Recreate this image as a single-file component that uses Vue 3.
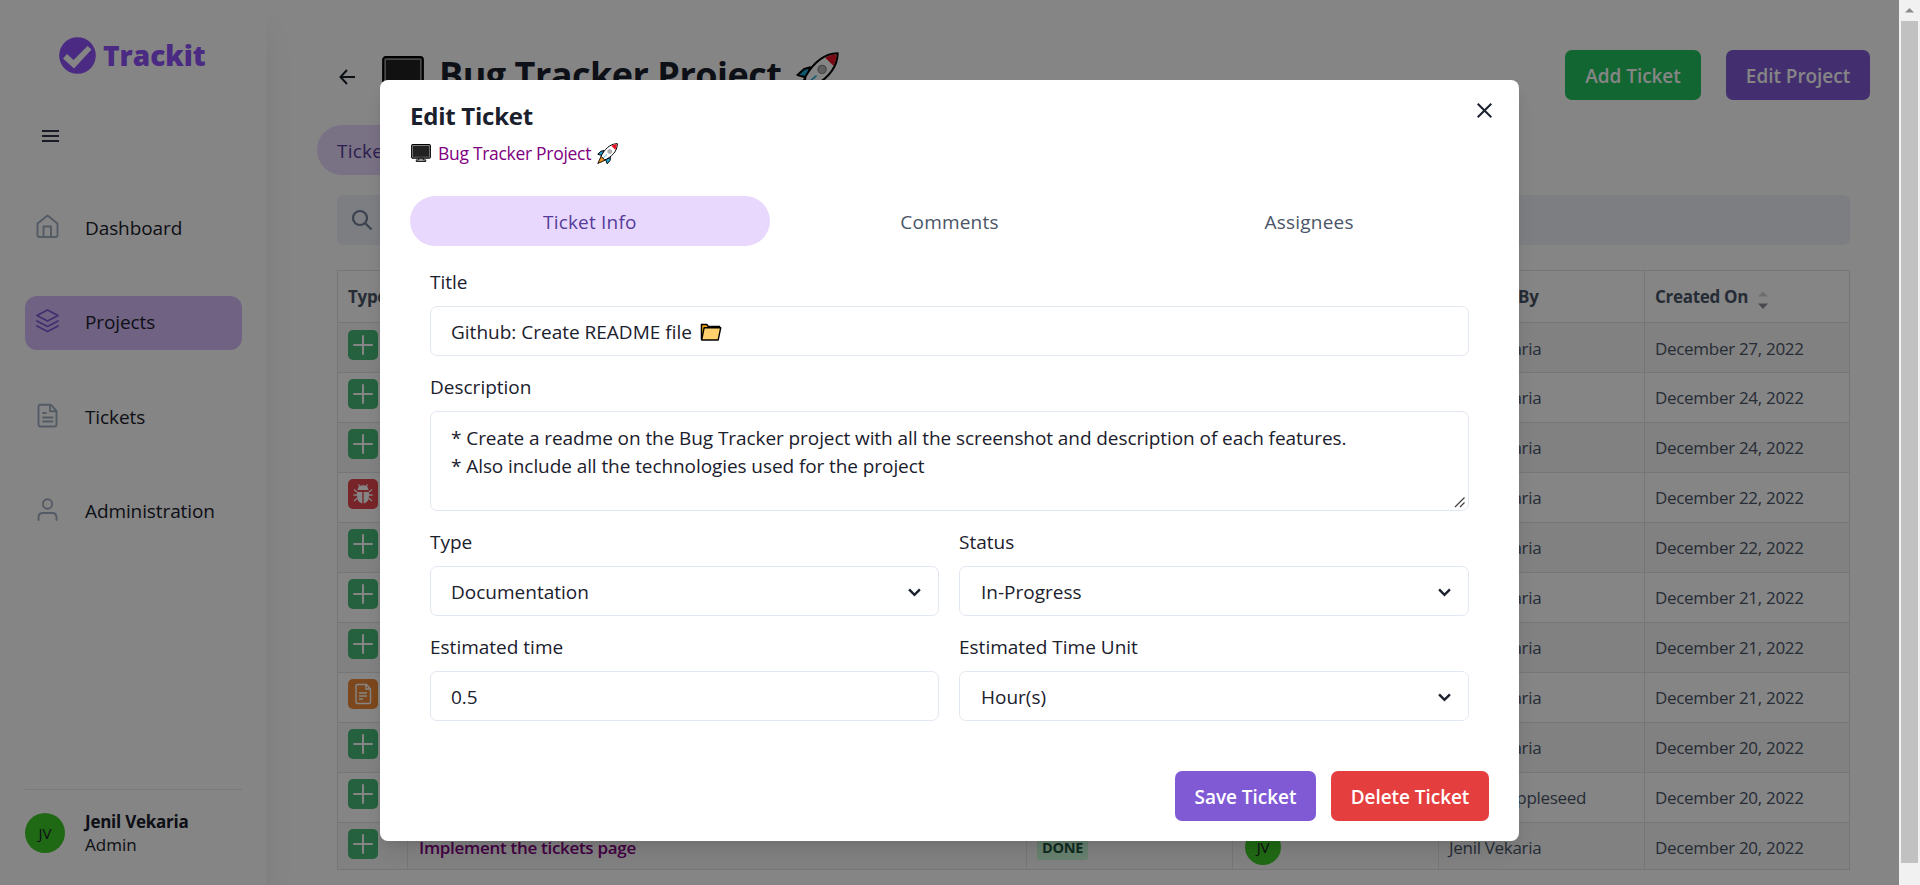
<script setup>
const nav = [
  { label: 'Dashboard', icon: 'home' },
  { label: 'Projects', icon: 'layers', active: true },
  { label: 'Tickets', icon: 'file' },
  { label: 'Administration', icon: 'user' },
]

const jenil = 'Jenil Vekaria'
const rows = [
  { type: 'feature', by: jenil, date: 'December 27, 2022' },
  { type: 'feature', by: jenil, date: 'December 24, 2022' },
  { type: 'feature', by: jenil, date: 'December 24, 2022' },
  { type: 'bug', by: jenil, date: 'December 22, 2022' },
  { type: 'feature', by: jenil, date: 'December 22, 2022' },
  { type: 'feature', by: jenil, date: 'December 21, 2022' },
  { type: 'feature', by: jenil, date: 'December 21, 2022' },
  { type: 'doc', by: jenil, date: 'December 21, 2022' },
  { type: 'feature', by: jenil, date: 'December 20, 2022' },
  { type: 'feature', by: 'Johnny Appleseed', date: 'December 20, 2022' },
  { type: 'feature', by: jenil, date: 'December 20, 2022', title: 'Implement the tickets page', status: 'DONE', assignee: 'JV' },
]

const description =
  '* Create a readme on the Bug Tracker project with all the screenshot and description of each features.\n* Also include all the technologies used for the project'
</script>

<template>
  <div class="screen">
    <svg width="0" height="0" class="defs">
      <symbol id="monitor" viewBox="0 0 42 38">
        <rect x="1.2" y="1.2" width="39.6" height="28.6" rx="2.5" fill="#8d8d8d" stroke="#000" stroke-width="2.2" />
        <rect x="4" y="4" width="34" height="23" fill="#222" />
        <path d="M16 30h10v3.5h5V37H11v-3.5h5z" fill="#9a9a9a" stroke="#000" stroke-width="1.8" />
      </symbol>
      <symbol id="rocket" viewBox="0 0 42 42">
        <path d="M9 25 1.5 41 17 34z" fill="#f7941d" stroke="#000" stroke-width="1.8" stroke-linejoin="round" />
        <path d="M14 15 8 16.500 1.500 22.500 10 25zM27 29l-1 6-5.500 6.500L17 33z" fill="#1ba7d9" stroke="#000" stroke-width="2" stroke-linejoin="round" />
        <path d="M40.700 1.300C31 1.500 20 6 9.500 23.500L8.500 27l6.500 6.500 4-1C35 23 40.500 13 40.700 1.300z" fill="#fff" stroke="#000" stroke-width="2" stroke-linejoin="round" />
        <path d="M39.600 2.400C36 2.500 32 3.500 28.500 5.500L36.500 13.500C38.800 9.500 39.500 6 39.600 2.400z" fill="#e81224" />
        <circle cx="25.500" cy="17" r="4" fill="#b5b5b5" stroke="#8a8a8a" stroke-width="1.200" />
        <path d="m12 30 8-7" stroke="#1ba7d9" stroke-width="1.500" />
      </symbol>
      <symbol id="chevron" viewBox="0 0 12 8">
        <path d="M1 1.200 6 6.200 11 1.200" fill="none" stroke="#1a202c" stroke-width="2.200" />
      </symbol>
    </svg>

    <div class="page">
      <aside class="sidebar">
        <div class="logo">
          <svg width="37" height="37" viewBox="0 0 37 37">
            <circle cx="18.500" cy="18.500" r="18.300" fill="#8f51fb" />
            <path d="M4 21.500 8 17l6.500 6L28.500 9l4 3.500L15 31.500z" fill="#fff" />
          </svg>
          <span>Trackit</span>
        </div>
        <svg class="burger" width="18" height="12" viewBox="0 0 18 12">
          <path d="M0 1h17M0 6h17M0 11h17" stroke="#2d3748" stroke-width="2" />
        </svg>
        <nav>
          <div v-for="n in nav" :key="n.label" class="nav-item" :class="{ active: n.active }">
            <svg width="25" height="25" viewBox="0 0 25 25" fill="none" stroke="currentColor" stroke-width="1.900" stroke-linejoin="round" stroke-linecap="round">
              <path v-if="n.icon === 'home'" d="M2.500 9.500 12.500 1.500l10 8V21q0 2-2 2h-16q-2 0-2-2zM8.500 23V12.500h7.500V23" />
              <path v-else-if="n.icon === 'layers'" d="m12.500 2 10.500 5.500-10.500 5.500L2 7.500zM2 13l10.500 5.500L23 13M2 18l10.500 5.500L23 18" />
              <path v-else-if="n.icon === 'file'" d="M5.500 1.800h10.500l5.500 6V21.500q0 2-2 2h-14q-2 0-2-2V3.800q0-2 2-2zM15 2v6.300h6.500M8 10h3M8 14.500h9.500M8 18.500h9.500" />
              <path v-else d="M3.500 23v-2.500q0-4.500 4.500-4.500h9q4.500 0 4.500 4.500V23M17.200 7a4.700 4.700 0 1 1-9.400 0 4.700 4.700 0 0 1 9.400 0z" />
            </svg>
            <span>{{ n.label }}</span>
          </div>
        </nav>
        <div class="account">
          <div class="avatar">JV</div>
          <div class="who">
            <b>Jenil Vekaria</b>
            <span>Admin</span>
          </div>
        </div>
      </aside>

      <main>
        <header>
          <svg class="back" width="17" height="16" viewBox="0 0 17 16">
            <path d="M16 8H1.500M8 1 1.500 8 8 15" fill="none" stroke="#1a202c" stroke-width="2" />
          </svg>
          <h1>
            <svg width="42" height="38"><use href="#monitor" /></svg>
            <span>Bug Tracker Project</span>
            <svg class="h-rocket" width="43" height="43"><use href="#rocket" /></svg>
          </h1>
          <button class="btn green">Add Ticket</button>
          <button class="btn purple">Edit Project</button>
        </header>
        <div class="tab-pill">Tickets</div>
        <div class="search">
          <svg width="22" height="22" viewBox="0 0 22 22" fill="none" stroke="#718096" stroke-width="2.200">
            <circle cx="9" cy="9" r="7" />
            <path d="m14 14 6.500 6.500" />
          </svg>
        </div>
        <div class="table">
          <div class="row head">
            <div>Type</div><div>Title</div><div>Status</div><div>Assignees</div><div class="by-head">Created By</div>
            <div>
              Created On
              <svg width="12" height="20" viewBox="0 0 12 20">
                <path d="M1 6.500 6 1.500l5 5z" fill="#d0d3d8" />
                <path d="M1 13.500 6 19l5-5.500z" fill="#8a8f98" />
              </svg>
            </div>
          </div>
          <div v-for="(r, i) in rows" :key="i" class="row">
            <div>
              <svg class="type" width="30" height="30" viewBox="0 0 30 30" :class="r.type">
                <rect width="30" height="30" rx="5" />
                <path v-if="r.type === 'feature'" d="M15 6v18M6 15h18" stroke="#fff" stroke-width="2" stroke-linecap="round" />
                <g v-else-if="r.type === 'bug'" stroke="#fff" stroke-width="1.300" fill="none">
                  <path d="M9.500 11a5.500 4.800 0 0 1 11 0zM9 13h5.300v11.500Q9 23 9 17zM15.700 13H21v4q0 6-5.300 7.500z" fill="#fff" stroke="none" />
                  <path d="M10.500 5.500 12 8M19.500 5.500 18 8M9 13 6 10.500M21 13l3-2.500M9 16H5.500M21 16h3.500M9.500 19 6 22M20.500 19l3.500 3" />
                </g>
                <g v-else stroke="#fff" stroke-width="1.400" fill="none">
                  <path d="M9.500 5.500h9l4 4.500V23q0 1.500-1.500 1.500H9.500Q8 24.500 8 23V7q0-1.500 1.500-1.500zM18 5.500V10h4.500M11 14h8M11 17h8M11 20h4" />
                </g>
              </svg>
            </div>
            <div class="ticket">{{ r.title }}</div>
            <div><span v-if="r.status" class="badge">{{ r.status }}</span></div>
            <div><span v-if="r.assignee" class="avatar small">{{ r.assignee }}</span></div>
            <div>{{ r.by }}</div>
            <div>{{ r.date }}</div>
          </div>
        </div>
      </main>
    </div>

    <div class="overlay">
      <section class="modal">
        <div class="modal-head">
          <div>
            <h2>Edit Ticket</h2>
            <a class="project">
              <svg width="20" height="18"><use href="#monitor" /></svg>
              <span>Bug Tracker Project</span>
              <svg class="m-rocket" width="21" height="21"><use href="#rocket" /></svg>
            </a>
          </div>
          <svg class="close" width="15" height="15" viewBox="0 0 15 15">
            <path d="m.7.700 13.600 13.600M14.300.700.700 14.300" stroke="#1a202c" stroke-width="2" />
          </svg>
        </div>
        <div class="tabs">
          <div class="tab on">Ticket Info</div>
          <div class="tab">Comments</div>
          <div class="tab">Assignees</div>
        </div>
        <div class="form">
          <div class="field wide">
            <label>Title</label>
            <div class="control">
              <span class="file-name">Github: Create README file</span>
              <svg width="22" height="18" viewBox="0 0 20 17">
                <path d="M1 15.500V1.500h5l1.500 1.800H18V5" fill="#f2a900" stroke="#000" stroke-width="1.400" />
                <path d="M3.500 4.500h15.700L16.800 16H1.200z" fill="#ffd06b" stroke="#000" stroke-width="1.300" stroke-linejoin="round" />
              </svg>
            </div>
          </div>
          <div class="field wide">
            <label>Description</label>
            <div class="control area">
              <span class="desc">{{ description }}</span>
              <svg class="grip" width="12" height="12" viewBox="0 0 12 12">
                <path d="M1 11 10.500 1.500M6 11l4.500-4.500" stroke="#444" stroke-width="1.300" />
              </svg>
            </div>
          </div>
          <div class="field">
            <label>Type</label>
            <div class="control">Documentation<svg class="chev" width="13" height="9"><use href="#chevron" /></svg></div>
          </div>
          <div class="field">
            <label>Status</label>
            <div class="control right">In-Progress<svg class="chev" width="13" height="9"><use href="#chevron" /></svg></div>
          </div>
          <div class="field">
            <label>Estimated time</label>
            <div class="control number">0.5</div>
          </div>
          <div class="field">
            <label>Estimated Time Unit</label>
            <div class="control right">Hour(s)<svg class="chev" width="13" height="9"><use href="#chevron" /></svg></div>
          </div>
        </div>
        <footer>
          <button class="btn save">Save Ticket</button>
          <button class="btn red">Delete Ticket</button>
        </footer>
      </section>
    </div>

    <div class="scrollbar">
      <svg width="21" height="21" viewBox="0 0 21 21"><path d="M6 12.500 10.500 8l4.500 4.500z" fill="#8a8a8a" /></svg>
      <div class="thumb"></div>
    </div>
  </div>
</template>

<style>
body {
  overflow: hidden;
  background: #fff;
}
</style>

<style scoped>
* {
  box-sizing: border-box;
}
.screen {
  position: relative;
  width: 1920px;
  height: 885px;
  overflow: hidden;
  font: 370 19px/30px "Open Sans", "Noto Sans", sans-serif;
  color: #1a202c;
}
.defs {
  position: absolute;
}
svg {
  display: block;
  flex: none;
}
.page {
  display: flex;
  width: 1899px;
  height: 885px;
}
.sidebar {
  display: flex;
  flex-direction: column;
  width: 267px;
  height: 885px;
  padding: 37px 25px 29px;
  box-shadow: 0 25px 31px -6px rgba(0, 0, 0, 0.1), 0 12px 12px -6px rgba(0, 0, 0, 0.04);
}
.logo {
  display: flex;
  align-items: center;
  gap: 7px;
  height: 37px;
  padding-left: 34px;
  font: 800 28px/37px "Open Sans", sans-serif;
  color: #8f51fb;
}
.burger {
  margin: 56px 0 0 17px;
}
nav {
  display: flex;
  flex-direction: column;
  gap: 40.600px;
  margin-top: 59px;
}
.nav-item {
  display: flex;
  align-items: center;
  gap: 25px;
  width: 217px;
  height: 54px;
  padding-left: 10px;
  border-radius: 12px;
  letter-spacing: -0.100px;
}
.nav-item span {
  margin-top: -1px;
}
.nav-item svg {
  color: #a0aec0;
  margin-bottom: 4px;
}
.nav-item.active {
  background: #d6bcfa;
}
.nav-item.active svg {
  color: #805ad5;
}
.account {
  display: flex;
  gap: 20px;
  margin-top: auto;
  padding-top: 23px;
  border-top: 1px solid #e2e8f0;
}
.avatar {
  display: flex;
  align-items: center;
  justify-content: center;
  width: 40px;
  height: 40px;
  border-radius: 50%;
  background: #3fca27;
  font-size: 15px;
}
.who {
  display: flex;
  flex-direction: column;
  font-size: 17px;
  line-height: 23px;
  margin-top: -3px;
}
.who b {
  letter-spacing: -0.250px;
}
main {
  flex: 1;
  padding: 50px 29px 0 50px;
}
header {
  display: flex;
  align-items: center;
  height: 50px;
}
.back {
  margin: 4px 26px 0 22px;
}
h1 {
  display: flex;
  align-items: center;
  flex: 1;
  margin: 0;
  font-size: 36px;
  line-height: 50px;
  font-weight: 700;
}
h1 span {
  width: 341px;
  margin: -1px 16px 0 15px;
  letter-spacing: -0.500px;
  white-space: nowrap;
}
.h-rocket {
  margin-top: -3px;
}
.btn {
  height: 50px;
  padding: 2px 0 0;
  border: 0;
  border-radius: 7px;
  color: #fff;
  font: 600 19px/48px "Open Sans", sans-serif;
  letter-spacing: -0.050px;
}
.btn.green {
  width: 136px;
  margin-right: 25px;
  background: #22c35e;
}
.btn.purple {
  width: 144px;
  background: #805ad5;
}
.tab-pill {
  width: 110px;
  height: 50px;
  margin-top: 25px;
  padding-left: 20px;
  border-radius: 25px;
  background: #e9d8fd;
  color: #553c9a;
  font-weight: 500;
  line-height: 52px;
  letter-spacing: 0.200px;
}
.search {
  display: flex;
  width: 1513px;
  height: 50px;
  margin: 20px 0 25px 20px;
  padding: 14px;
  border-radius: 7px;
  background: #eef1f9;
}
.table {
  width: 1513px;
  margin-left: 20px;
  border: 1px solid #e2e2e2;
  font-size: 17px;
  color: #4a5568;
}
.row {
  display: grid;
  grid-template-columns: 70px 619px 206px 206px 206px 1fr;
  height: 50px;
  border-bottom: 1px solid #e2e2e2;
}
.row:nth-child(even) {
  background: #f7f7f7;
}
.row:last-child {
  height: 46px;
  border-bottom: 0;
}
.row > div {
  display: flex;
  align-items: center;
  height: 49px;
  padding: 0 10px;
  border-right: 1px solid #e2e2e2;
  letter-spacing: -0.300px;
  white-space: nowrap;
}
.row:nth-child(2) > div {
  padding-top: 2px;
}
.row > div:last-child {
  border-right: 0;
}
.row:last-child > div {
  height: 46px;
  padding-top: 3px;
}
.row.head {
  height: 52px;
  font-weight: 700;
  letter-spacing: -0.400px;
}
.row.head > div {
  height: 51px;
  padding-top: 1px;
}
.row.head svg {
  margin: 5px 0 0 9px;
}
.type {
  margin-bottom: 7px;
}
.row:last-child .type {
  margin-bottom: 7px;
}
.type.feature rect {
  fill: #48bb78;
}
.type.bug rect {
  fill: #e5484d;
}
.type.doc rect {
  fill: #ed8936;
}
.row > .ticket {
  padding-left: 11px;
  color: #800080;
  font-weight: 600;
}
.badge {
  height: 25px;
  padding: 0 5px;
  border-radius: 3px;
  background: #c6f6d5;
  color: #22543d;
  font-size: 14.500px;
  line-height: 25px;
  font-weight: 700;
}
.avatar.small {
  width: 36px;
  height: 36px;
  margin: -2px 0 0 2px;
  color: #1a202c;
}
.overlay {
  position: absolute;
  inset: 0 21px 0 0;
  padding: 80px 380px 0;
  background: rgba(0, 0, 0, 0.48);
}
.modal {
  width: 1139px;
  height: 761px;
  padding: 20px 30px;
  border-radius: 8px;
  background: #fff;
  box-shadow: 0 12px 19px -4px rgba(0, 0, 0, 0.1), 0 5px 8px -2px rgba(0, 0, 0, 0.05);
}
.modal-head {
  display: flex;
  justify-content: space-between;
  height: 96px;
}
h2 {
  margin: 0;
  font-size: 24px;
  line-height: 32px;
  font-weight: 700;
  letter-spacing: -0.250px;
}
.project {
  display: flex;
  align-items: center;
  height: 30px;
  margin-top: 6px;
  padding: 0 0 0 1px;
  color: #800080;
  font-size: 17.500px;
  font-weight: 500;
}
.project span {
  width: 153px;
  margin: 0 6px 0 7px;
  letter-spacing: -0.300px;
  white-space: nowrap;
}
.close {
  margin: 3px -3px 0 0;
}
.tabs {
  display: grid;
  grid-template-columns: repeat(3, 1fr);
  height: 50px;
}
.tab {
  height: 50px;
  border-radius: 25px;
  text-align: center;
  line-height: 52px;
  font-weight: 500;
  letter-spacing: 0.200px;
  color: #4a5568;
}
.tab.on {
  background: #e9d8fd;
  color: #553c9a;
}
.form {
  display: grid;
  grid-template-columns: 509px 510px;
  column-gap: 20px;
  row-gap: 15px;
  padding: 20px 20px 0;
}
.wide {
  grid-column: span 2;
}
label {
  display: block;
  height: 40px;
  line-height: 32px;
}
.control {
  display: flex;
  align-items: center;
  height: 50px;
  padding: 2px 20px 0;
  border: 1px solid #e2e8f0;
  border-radius: 7px;
}
.file-name {
  margin-right: 8px;
}
.control.right {
  padding-left: 21px;
}
.area {
  position: relative;
  height: 100px;
  align-items: flex-start;
  padding-top: 13px;
  line-height: 27.500px;
}
.desc {
  white-space: pre;
  letter-spacing: -0.080px;
}
.grip {
  position: absolute;
  right: 2px;
  bottom: 2px;
}
.chev {
  margin-left: auto;
  margin-right: -3px;
}
footer {
  display: flex;
  justify-content: flex-end;
  gap: 15px;
  margin-top: 50px;
}
.save {
  width: 141px;
  background: #805ad5;
}
.red {
  width: 158px;
  background: #e53e3e;
}
.scrollbar {
  position: absolute;
  inset: 0 0 0 auto;
  width: 21px;
  background: #f1f1f1;
}
.thumb {
  width: 17px;
  height: 842px;
  margin-left: 2px;
  background: #c1c1c1;
}
</style>
